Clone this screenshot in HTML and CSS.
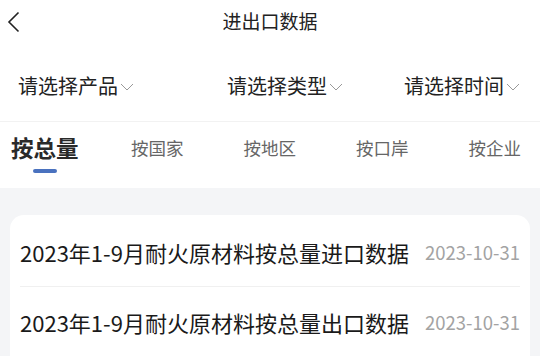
FILE: index.html
```html
<!DOCTYPE html>
<html lang="zh-CN">
<head>
<meta charset="utf-8">
<link rel="stylesheet" href="styles.css">
</head>
<body>
<div class="page">
  <header class="nav">
    <div class="back">
      <svg width="14" height="22" viewBox="0 0 14 22"><path d="M11.5 1.5 L2 11 L11.5 20.5" fill="none" stroke="#222" stroke-width="1.6"/></svg>
    </div>
    <div class="title">进出口数据</div>
    <div></div>
  </header>
  <div class="filters">
    <div class="filter f1">请选择产品<svg class="caret" width="14" height="8" viewBox="0 0 14 8"><path d="M1 1 L7 7 L13 1" fill="none" stroke="#999" stroke-width="1"/></svg></div>
    <div class="filter f2">请选择类型<svg class="caret" width="14" height="8" viewBox="0 0 14 8"><path d="M1 1 L7 7 L13 1" fill="none" stroke="#999" stroke-width="1"/></svg></div>
    <div class="filter f3">请选择时间<svg class="caret" width="14" height="8" viewBox="0 0 14 8"><path d="M1 1 L7 7 L13 1" fill="none" stroke="#999" stroke-width="1"/></svg></div>
  </div>
  <div class="tabs">
    <div class="tab first active">按总量<span class="bar"></span></div>
    <div class="tab">按国家</div>
    <div class="tab">按地区</div>
    <div class="tab">按口岸</div>
    <div class="tab">按企业</div>
  </div>
  <main class="content">
    <div class="card">
      <div class="row"><span class="name">2023年1-9月耐火原材料按总量进口数据</span><span class="date">2023-10-31</span></div>
      <div class="row"><span class="name">2023年1-9月耐火原材料按总量出口数据</span><span class="date">2023-10-31</span></div>
    </div>
  </main>
</div>
</body>
</html>
```
FILE: styles.css
```css
html, body {
  margin: 0;
  padding: 0;
  background: #fff;
}
body {
  font-family: "Noto Sans CJK SC", "Noto Sans", sans-serif;
  color: #222;
}
.page {
  width: 540px;
  height: 356px;
  overflow: hidden;
}
.nav {
  height: 42px;
  display: grid;
  grid-template-columns: 60px 1fr 60px;
  align-items: center;
}
.back {
  padding-left: 7px;
  display: flex;
  align-items: center;
  padding-top: 1px;
}
.title {
  text-align: center;
  font-size: 19px;
  color: #222;
  margin-top: -2px;
}
.filters {
  height: 80px;
  display: flex;
  align-items: center;
  padding-left: 18px;
  padding-top: 9px;
  border-bottom: 1px solid #f2f2f2;
  box-sizing: border-box;
}
.filter {
  display: flex;
  align-items: center;
  font-size: 20px;
  color: #222;
  line-height: 1;
}
.caret {
  margin-left: 2px;
  margin-top: 2px;
}
.f2 { margin-left: 93px; }
.f3 { margin-left: 61px; }
.tabs {
  height: 66px;
  display: flex;
  align-items: center;
  padding-bottom: 16px;
  box-sizing: border-box;
}
.tab {
  flex: 0 0 112.5px;
  text-align: center;
  font-size: 17.5px;
  color: #666;
  position: relative;
}
.tab.first {
  flex-basis: 101px;
  text-align: left;
  padding-left: 11px;
  box-sizing: border-box;
}
.tab.active {
  font-size: 22.5px;
  font-weight: 700;
  color: #2a2a2a;
}
.bar {
  position: absolute;
  left: 33px;
  bottom: -10px;
  width: 24px;
  height: 4px;
  border-radius: 2px;
  background: #4a72bf;
}
.content {
  background: #f4f5f7;
  height: 168px;
  padding: 27px 10px 0 10px;
  box-sizing: border-box;
}
.card {
  background: #fff;
  border-radius: 14px 14px 0 0;
  padding: 2px 10px 0 10px;
  height: 200px;
}
.row {
  height: 69px;
  display: flex;
  align-items: center;
  justify-content: space-between;
  border-bottom: 1px solid #f0f0f0;
}
.name {
  font-size: 22px;
  color: #1a1a1a;
}
.date {
  font-size: 18.5px;
  color: #a3a3a3;
}
```
